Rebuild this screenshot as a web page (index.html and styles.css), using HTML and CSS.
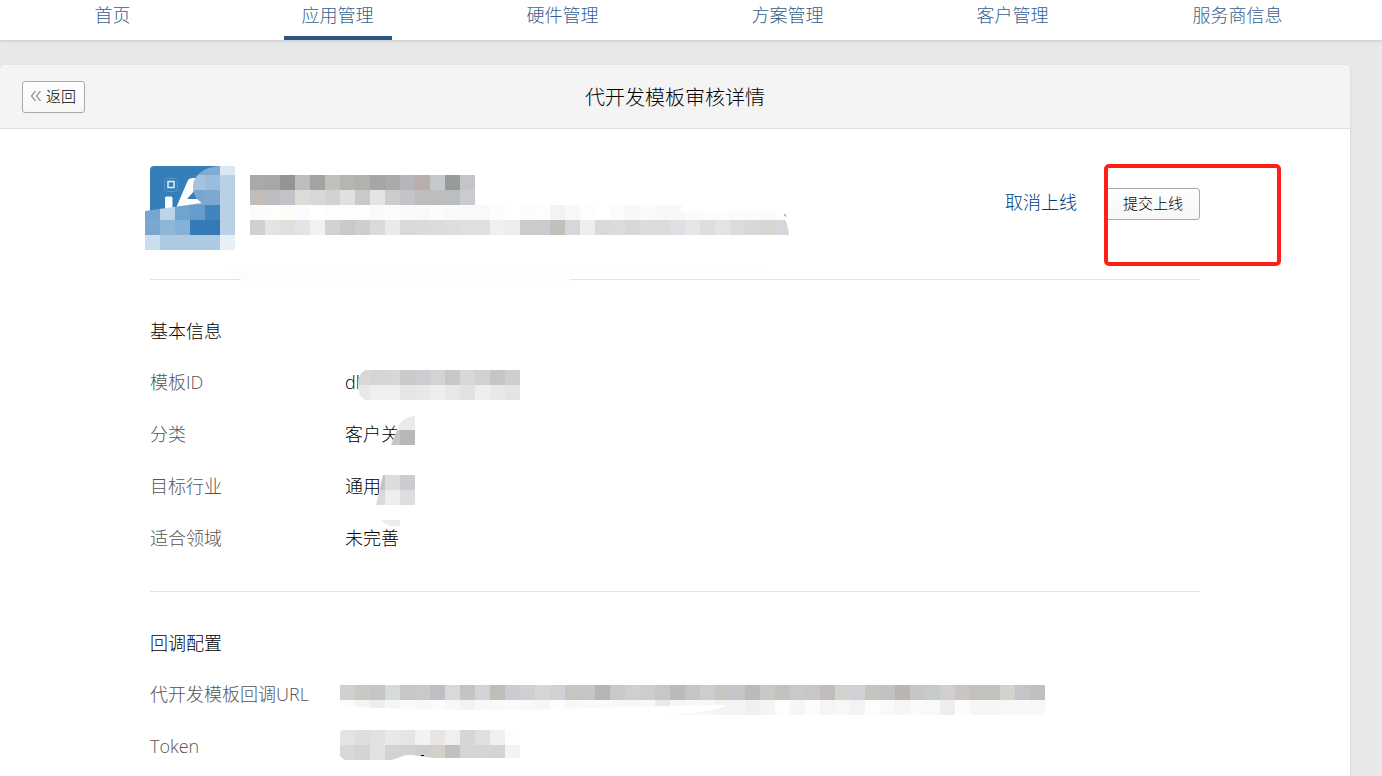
FILE: index.html
```
<!DOCTYPE html>
<html lang="zh-CN">
<head>
    <meta charset="UTF-8">
    <meta name="viewport" content="width=device-width, initial-scale=1.0">
    <title>代开发模板审核详情</title>
    <link rel="stylesheet" href="styles.css">
</head>
<body>
    <header class="top-bar">
        <nav class="nav">
            <a href="#">首页</a>
            <a href="#" class="active">应用管理</a>
            <a href="#">硬件管理</a>
            <a href="#">方案管理</a>
            <a href="#">客户管理</a>
            <a href="#">服务商信息</a>
        </nav>
    </header>

    <main class="panel">
        <div class="panel-header">
            <button type="button" class="btn btn-back">
                <svg width="12" height="12" viewBox="0 0 12 12" aria-hidden="true">
                    <path d="M5.500 1L1.500 6l4 5M10.500 1L6.500 6l4 5" fill="none" stroke="#999" stroke-width="1.300"/>
                </svg>
                返回
            </button>
            <h1>代开发模板审核详情</h1>
        </div>

        <div class="panel-body">
            <!-- 应用信息 -->
            <div class="app">
                <svg class="app-logo" width="90" height="84" viewBox="0 0 90 84" aria-hidden="true">
                    <clipPath id="logoMask"><path d="M90 0H75C58 1 48 10 48 21C48 29 52 34 57 37L0 45V84H90Z"/></clipPath>
                    <path d="M5 50V4Q5 0 9 0H86V50Z" fill="#357eba"/>
                    <rect x="19.500" y="12.500" width="13" height="13" rx="3" fill="none" stroke="#5a95c6"/>
                    <rect x="23" y="15.500" width="6" height="6" fill="none" stroke="#e4eef7" stroke-width="1.500"/>
                    <path d="M20 32Q20 30.500 21.500 30.500H26Q27.500 30.500 27.500 32V44H20ZM31 42L43 14Q44.500 12 48 12H58V24H50L42 33H60V39Z" fill="#fff"/>
                    <g clip-path="url(#logoMask)">
                        <g class="mosaic" data-y="-6" data-colors="357eba 357eba 82abd2 82abd2 82abd2 dbe8f3/357eba 357eba 357eba a5c3df 9bbddd bad0e6/357eba 357eba 79a7d0 79a7d0 7ba9d3 bad0e6/78a5cf bcd5e6 6fa3d0 669ccb 4185bd bad0e6/78a7d0 8fb5d7 86b1d7 357ab6 357ab6 bad0e6/cbdeec adcae2 adcae2 adcae2 adcae2 e7eff7"></g>
                    </g>
                </svg>
                <svg class="app-name" width="540" height="60" viewBox="0 0 540 60" aria-hidden="true">
                    <clipPath id="nameMask"><path d="M0 0H225V30H433L429 36H518C532 37 538 44 539 60H0Z"/></clipPath>
                    <g clip-path="url(#nameMask)">
                        <g class="mosaic" data-colors="a9a9a9 a6a8a6 969492 bfbcc0 a1a49f c0c0be b5b6af b1b1af a8a5a7 aca9aa b4b6b8 b9adad c3c9ce 989b99 c4c5cb/c3bdba bbbdbf c3c2c8 dddbda d7d9d6 d1d3d0 e2e0de c9c9c9 e5e3e4 cdcccb c3c4c7 bfbdbb bfbdbb b9bebe cbccd1/fcfcfc fdfdfb fcfcf9 fafdfd fff fdfdfd fdfdfd fdfdfd fafafa fcfcfc f9f9f9 f9f9f9 fcfcfc f9f9f9 f9f9f9 f9f9f9 fbfdfd fff fcfcfc fcfdfd f3f3f3 f8f8f8 fcfefe fff fbfbfb f8f8f8 f9fbfb f8f8f8 f8f8f8 fbfbfb fcfcfc fcfcfc fbfbfb fbfbfb fafafa fbfcfc/d0d0d0 e4e4e4 e0dfdd e3e4e6 f1f1ef d2d2d2 c8cac9 d0cecd dadada e9ebea d9d9d9 dadada dedcdb dcdedd e0e0e0 dfdfdf eef0f0 efedec cdcbca c9cbce c2c0bd d5d7da eeeeee d9d9d9 dbdbd9 d7d7d7 dcdcdd dddbda dfe0e3 e6e6e6 dcdfde e3e3e3 dbdbd9 d8d8da d7d5d3 d4d8dc"></g>
                    </g>
                    <path d="M534 39l2 1v2l-1-1z" fill="#5b7fc0"/>
                </svg>
                <div class="app-actions">
                    <a href="#">取消上线</a>
                    <div class="submit">
                        <button type="button" class="btn btn-submit">提交上线</button>
                        <span class="mark"></span>
                    </div>
                </div>
                <svg class="smudge" width="550" height="16" viewBox="0 0 550 16" aria-hidden="true">
                    <path d="M0 0H550L348 6L344 16H16Z" fill="#fdfdfd"/>
                </svg>
            </div>

            <section class="section">
                <h2>基本信息</h2>
                <dl>
                    <dt>模板ID</dt>
                    <dd>dl
                        <svg class="mask" width="180" height="52" viewBox="0 0 180 52" aria-hidden="true">
                            <clipPath id="idMask"><path d="M180 14H26C20 16 18 22 18 29C18 36 20 41 25 44H180Z"/></clipPath>
                            <g clip-path="url(#idMask)">
                                <g class="mosaic" data-x="15" data-y="14" data-colors="dad8d7 d5d5d5 d7d7d7 cbcacb cdccd0 d3d3d3 c7c7c7 d9d7d5 d1d1d1 c6c6c6 cdcfcf/e9e8e7 edf0ef f0f0f0 e8e6e5 e8e7ea eeeeee e8e7e5 dfe2e1 eeeeee e8e8e8 e4e4e4"></g>
                            </g>
                        </svg>
                    </dd>
                    <dt>分类</dt>
                    <dd>客户关
                        <svg class="mask" width="75" height="52" viewBox="0 0 75 52" aria-hidden="true">
                            <path d="M75 8V22H57C60 13 66 8 75 8Z" fill="#e9ebeb"/>
                            <path d="M57 22H60V37H51Z" fill="#c6c5c8"/>
                            <path d="M60 22H75V37H60Z" fill="#b8b7b9"/>
                        </svg>
                    </dd>
                    <dt>目标行业</dt>
                    <dd>通用
                        <svg class="mask" width="75" height="52" viewBox="0 0 75 52" aria-hidden="true">
                            <clipPath id="tradeMask"><path d="M43 15H75V45H36Z"/></clipPath>
                            <g clip-path="url(#tradeMask)">
                                <g class="mosaic" data-x="30" data-y="15" data-colors="c5c3c6 dcdcda cccbd0/dad9df eeeeed dedede"></g>
                            </g>
                        </svg>
                    </dd>
                    <dt>适合领域</dt>
                    <dd>未完善
                        <svg class="mask" width="75" height="52" viewBox="0 0 75 52" aria-hidden="true">
                            <path d="M41 8H60V14Q48 16 41 8Z" fill="#ebebed"/>
                        </svg>
                    </dd>
                </dl>
            </section>

            <section class="section">
                <h2>回调配置</h2>
                <dl>
                    <dt>代开发模板回调URL</dt>
                    <dd>
                        <svg class="mask" width="705" height="52" viewBox="0 0 705 52" aria-hidden="true">
                            <clipPath id="urlMask"><path d="M0 17H705V47H330Q370 44 388 37Q300 38 190 42Q40 42 10 38L0 33Z"/></clipPath>
                            <g clip-path="url(#urlMask)">
                                <g class="mosaic" data-y="17" data-colors="d1cfd0 c8c8c4 c5c5c8 d7dada c9c7c5 cbc9c7 bfbec2 d8dad9 c4c4c1 d0d4d7 bfbdb9 cccbcf cecfd1 d8d5d7 d0d1d4 c7c4c2 c3c5c8 b3b6b3 c9c9c8 cfcfcf cdcdcb c7c7c7 babab8 c5c5c4 cccdd1 c5c7c3 c4c5c9 b7bbba c8c8c5 c4c2c0 c8c9cc c7c7ca c0bcbe d3d2cf cfd1d4 c4c4c1 c3c1c4 bab5b2 c6c6c7 c5cacc d1cfcd cac5c3 c1c1be c2c2c1 d2d2cf c4c5c8 c0c0be/fafafa f5f5f3 ebedf0 f5f5f3 f8fafc f8f8f8 fbfbfb f7f7f7 f0f3f2 f8f8f8 f9f9f9 fbfbfb f9f9f9 f6f6f6 fdfdfd f8f8f6 f9f9f9 f9f9f9 f8f8f8 f6f6f6 f8f8f8 e9ebea f6f6f6 f8f8f8 f7f7f7 f3f3f3 f4f4f4 f0f0ee f3f5f4 fdfdfd f6f6f6 fcfcfc f5f5f5 f7f7f7 f3f3f3 fdfdfd f9f9f9 f5f5f5 fafafa f8fafa eeeeee fcfcfc f6f6f6 f6f6f6 f7f7f7 f8f8f8 f7f7f7"></g>
                            </g>
                        </svg>
                    </dd>
                    <dt>Token</dt>
                    <dd>
                        <svg class="mask" width="180" height="52" viewBox="0 0 180 52" aria-hidden="true">
                            <clipPath id="tokenMask"><path d="M2 10H180V38H95C82 37 70 33 63 36L52 40H4L0 36V12Z"/></clipPath>
                            <g clip-path="url(#tokenMask)">
                                <g class="mosaic" data-y="10" data-colors="e3e3e3 dedede e2e1df e8e8e8 e7e4e8 f1f3f2 e8e6e4 eef0ef d8d5d7 e0e0e0 f0f0f0 fdfdfd/d8d8d8 d4d4d4 e3e1e2 d2d3d5 d3d1d2 cdced1 d5d1ca c0c0c7 d5d5d5 d5d5d5 d4d4d2 f2f3f5"></g>
                            </g>
                            <path d="M81 35h3v1h-3z" fill="#000"/>
                        </svg>
                    </dd>
                </dl>
            </section>
        </div>
    </main>

    <script>
        // 每个色块的边长
        const CELL = 15;

        // 按颜色列表生成马赛克，"/" 分隔行
        document.querySelectorAll(".mosaic").forEach(group => {
            const left = Number(group.dataset.x || 0);
            const top = Number(group.dataset.y || 0);
            group.dataset.colors.split("/").forEach((line, row) => {
                line.split(" ").forEach((color, col) => {
                    const rect = document.createElementNS("http://www.w3.org/2000/svg", "rect");
                    rect.setAttribute("x", left + col * CELL);
                    rect.setAttribute("y", top + row * CELL);
                    rect.setAttribute("width", CELL);
                    rect.setAttribute("height", CELL);
                    rect.setAttribute("fill", "#" + color);
                    group.appendChild(rect);
                });
            });
        });
    </script>
</body>
</html>
```
FILE: styles.css
```
* {
    box-sizing: border-box;
}
body {
    display: flex;
    flex-direction: column;
    min-height: 100vh;
    margin: 0;
    background-color: #e7e8ea;
    color: #000;
    font-family: "Open Sans", "Noto Sans CJK SC", sans-serif;
    font-size: 18px;
    font-weight: 300;
}
a {
    text-decoration: none;
}
h1, h2, dl, dd {
    margin: 0;
    font-weight: 300;
}
/* 顶部导航 */
.top-bar {
    background-color: #fff;
    box-shadow: 0 1px 3px rgba(0, 0, 0, 0.15);
}
.nav {
    display: grid;
    grid-template-columns: repeat(6, 1fr);
    justify-items: center;
    margin-right: 32px;
}
.nav a {
    height: 40px;
    padding: 0 18px;
    line-height: 30px;
    color: #36608f;
}
.nav .active {
    border-bottom: 4px solid #2b5582;
}
/* 主面板 */
.panel {
    flex: 1;
    margin: 25px 32px 0 0;
    background-color: #fff;
    border-radius: 5px 5px 0 0;
    box-shadow: 0 1px 3px rgba(0, 0, 0, 0.12);
}
.panel-header {
    display: grid;
    grid-template-columns: 1fr auto 1fr;
    align-items: center;
    height: 64px;
    padding: 0 22px;
    background-color: #f4f4f4;
    border-bottom: 1px solid #d9e0e6;
    border-radius: 5px 5px 0 0;
}
.panel-header h1 {
    font-size: 20px;
}
.panel-body {
    padding: 0 150px;
}
.btn {
    height: 32px;
    padding: 0 16px 2px;
    border: 1px solid #aaa;
    border-radius: 3px;
    background: linear-gradient(#fff, #f6f6f6);
    color: #000;
    font: inherit;
    font-size: 15px;
    line-height: 28px;
    cursor: pointer;
}
.btn-back {
    display: flex;
    align-items: center;
    gap: 4px;
    justify-self: start;
    padding: 0 8px 2px 7px;
}
/* 应用信息 */
.app {
    position: relative;
    display: flex;
    align-items: flex-start;
    height: 151px;
    padding-top: 37px;
    border-bottom: 1px solid #e4e4e4;
}
.app-logo {
    flex: none;
    margin-left: -5px;
}
.app-name {
    flex: none;
    margin: 9px 0 0 15px;
}
.app-actions {
    display: flex;
    gap: 29px;
    margin: 22px 0 0 auto;
    line-height: 28px;
    white-space: nowrap;
}
.app-actions a {
    color: #003c78;
}
.submit {
    position: relative;
    display: flex;
}
/* 红框标注 */
.mark {
    position: absolute;
    top: -24px;
    left: -2px;
    width: 177px;
    height: 102px;
    border: 4px solid #ff2014;
    border-radius: 5px;
    pointer-events: none;
}
.smudge {
    position: absolute;
    top: 136px;
    left: 76px;
}
/* 信息列表 */
.section {
    padding: 26px 0 27px;
}
.section + .section {
    padding-bottom: 0;
    border-top: 1px solid #e4e4e4;
}
.section h2 {
    font-size: 18px;
    line-height: 50px;
}
.section dl {
    display: grid;
    grid-template-columns: 195px 1fr;
    grid-auto-rows: 52px;
    line-height: 52px;
}
.section dt {
    color: #555;
    white-space: nowrap;
}
.section dd {
    position: relative;
}
.mask {
    position: absolute;
    top: 0;
    left: -5px;
}
```
